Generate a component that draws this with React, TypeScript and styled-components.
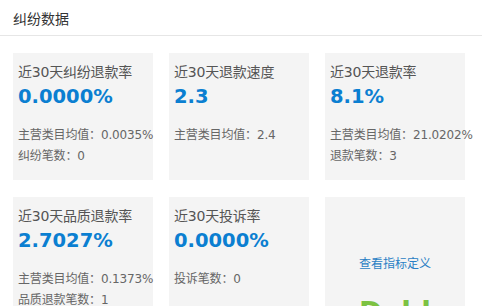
import React from "react";
import styled, { createGlobalStyle } from "styled-components";

const Global = createGlobalStyle`
  html, body { margin: 0; padding: 0; background: #fff; }
  body { font-family: "DejaVu Sans", "Noto Sans CJK SC", sans-serif; overflow: hidden; }
`;

const Page = styled.div`
  width: 482px;
  height: 306px;
  overflow: hidden;
  background: #fff;
`;

const Header = styled.div`
  height: 35px;
  border-bottom: 1px solid #e6e6e6;
  padding: 0 13px;
  display: flex;
  align-items: center;
  font-family: "Noto Sans CJK SC", sans-serif;
  font-size: 14px;
  color: #333;
`;

const Grid = styled.div`
  display: grid;
  grid-template-columns: repeat(3, 140px);
  grid-auto-rows: 127px;
  column-gap: 16px;
  row-gap: 17px;
  padding: 17px 13px;
`;

const Card = styled.div<{ $center?: boolean }>`
  background: #f4f4f4;
  padding: 9px 5px 0;
  display: flex;
  flex-direction: column;
  align-items: ${(p) => (p.$center ? "center" : "flex-start")};
  min-width: 0;
`;

const Title = styled.div`
  font-size: 14px;
  line-height: 20px;
  color: #555;
  white-space: nowrap;
  letter-spacing: -0.2px;
`;

const Value = styled.div`
  margin-top: 2px;
  font-size: 19.5px;
  line-height: 26px;
  font-weight: bold;
  color: #0b7fd1;
`;

const Subs = styled.div`
  margin-top: 15px;
  display: flex;
  flex-direction: column;
`;

const Sub = styled.div`
  font-size: 12px;
  line-height: 21px;
  color: #666;
  white-space: nowrap;
  letter-spacing: -0.15px;
`;

const Link = styled.a`
  margin-top: 48px;
  font-size: 12px;
  line-height: 17px;
  color: #2a7fc4;
  text-decoration: none;
  font-family: "Noto Sans CJK SC", sans-serif;
`;

const Brand = styled.div`
  margin-top: 22px;
  font-size: 28px;
  font-weight: bold;
  color: #7cc242;
  line-height: 40px;
`;

type Metric = { title: string; value: string; subs: string[] };

const metrics: Metric[] = [
  { title: "近30天纠纷退款率", value: "0.0000%", subs: ["主营类目均值：0.0035%", "纠纷笔数：0"] },
  { title: "近30天退款速度", value: "2.3", subs: ["主营类目均值：2.4"] },
  { title: "近30天退款率", value: "8.1%", subs: ["主营类目均值：21.0202%", "退款笔数：3"] },
  { title: "近30天品质退款率", value: "2.7027%", subs: ["主营类目均值：0.1373%", "品质退款笔数：1"] },
  { title: "近30天投诉率", value: "0.0000%", subs: ["投诉笔数：0"] },
];

export default function App() {
  return (
    <Page>
      <Global />
      <Header>纠纷数据</Header>
      <Grid>
        {metrics.map((m, i) => (
          <Card key={i}>
            <Title>{m.title}</Title>
            <Value>{m.value}</Value>
            <Subs>
              {m.subs.map((s, j) => (
                <Sub key={j}>{s}</Sub>
              ))}
            </Subs>
          </Card>
        ))}
        <Card $center>
          <Link href="#">查看指标定义</Link>
          <Brand>Dabl</Brand>
        </Card>
      </Grid>
    </Page>
  );
}
